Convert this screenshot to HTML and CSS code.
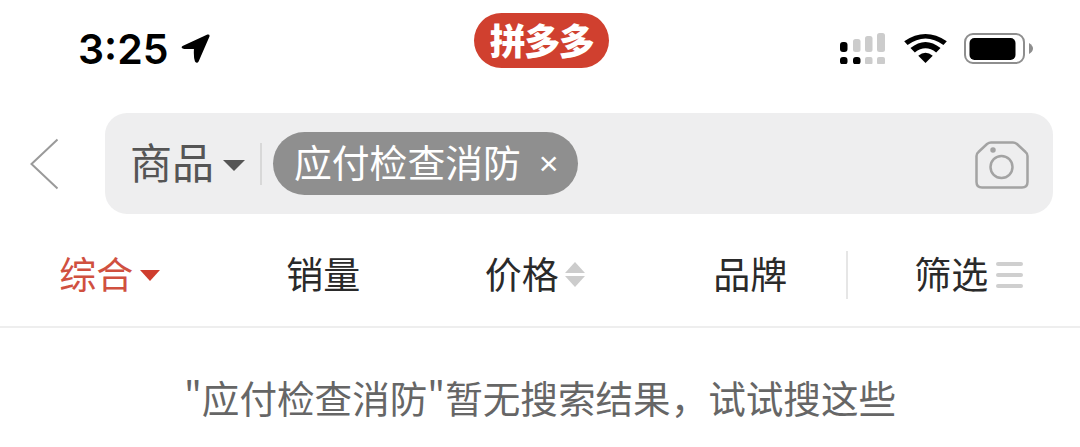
FILE: index.html
```html
<!DOCTYPE html>
<html lang="zh-CN">
<head>
<meta charset="utf-8">
<title>搜索结果</title>
<link rel="stylesheet" href="styles.css">
</head>
<body>
<div class="page">
  <header class="status">
    <div class="status-left">
      <span class="time">3:25</span>
      <svg class="loc" viewBox="0 0 28 28"><path d="M1.500 11.500 L25.500 0.500 Q28 0 27.500 2.500 L17 26.500 Q15.500 29 13.500 26.500 Q12 23 12.500 14.500 L3 14.500 Q-1 13.500 1.500 11.500Z"/></svg>
    </div>
    <div class="status-mid"><span class="logo">拼多多</span></div>
    <div class="status-right">
      <svg class="signal" viewBox="0 0 45 31">
        <rect x="0" y="9" width="7.500" height="10" rx="3" fill="#000"/>
        <rect x="13" y="6" width="7.500" height="13" rx="2.500" fill="#ccc"/>
        <rect x="25" y="3" width="7.500" height="16" rx="2.500" fill="#ccc"/>
        <rect x="37" y="0" width="8" height="19" rx="2.500" fill="#ccc"/>
        <rect x="0" y="24" width="7.500" height="7.500" rx="3" fill="#000"/>
        <rect x="13" y="24" width="7.500" height="7.500" rx="3" fill="#000"/>
        <rect x="25" y="24" width="7.500" height="7.500" rx="2" fill="#ccc"/>
        <rect x="37" y="24" width="8" height="7.500" rx="2" fill="#ccc"/>
      </svg>
      <svg class="wifi" viewBox="0 0 44 32">
        <path d="M22 31 L14.500 23.500 Q22 17.500 29.500 23.500Z"/>
        <path d="M11 20 L6.500 15.500 Q22 3 37.500 15.500 L33 20 Q22 11.500 11 20Z"/>
        <path d="M3.500 12.500 L0 8.500 Q22 -6.500 44 8.500 L40.500 12.500 Q22 -1 3.500 12.500Z"/>
      </svg>
      <svg class="battery" viewBox="0 0 69 31">
        <rect x="1" y="1" width="59" height="29" rx="8" fill="none" stroke="#8e8e8e" stroke-width="2"/>
        <rect x="5.500" y="5" width="46" height="22" rx="5" fill="#000"/>
        <path d="M65 10 Q69 12.500 69 15.500 Q69 18.500 65 21Z" fill="#8e8e8e"/>
      </svg>
    </div>
  </header>

  <div class="search-row">
    <svg class="back" viewBox="0 0 30 52"><path d="M28 1.500 L2 26 L28 50.500"/></svg>
    <div class="search">
      <span class="scope">商品</span>
      <span class="caret caret-dark"></span>
      <span class="vline"></span>
      <span class="chip"><span class="chip-text">应付检查消防</span><span class="chip-x">×</span></span>
      <svg class="camera" viewBox="0 0 54 48">
        <path d="M1.500 15 Q1.500 12.500 3.500 11 L12 3 Q14 1.500 16 1.500 L38 1.500 Q40 1.500 42 3 L50.500 11 Q52.500 12.500 52.500 15 L52.500 41 Q52.500 46.500 47 46.500 L7 46.500 Q1.500 46.500 1.500 41Z"/>
        <circle cx="26.500" cy="26" r="11"/>
        <circle class="dot" cx="18" cy="9" r="1.500"/>
      </svg>
    </div>
  </div>

  <nav class="tabs">
    <div class="tab active"><span>综合</span><span class="caret caret-red"></span></div>
    <div class="tab"><span>销量</span></div>
    <div class="tab tab-price"><span>价格</span>
      <span class="sort"><span class="sort-up"></span><span class="sort-down"></span></span>
    </div>
    <div class="tab"><span>品牌</span></div>
    <div class="tab tab-filter"><span>筛选</span>
      <span class="bars"><i></i><i></i><i></i></span>
    </div>
  </nav>

  <p class="empty">"应付检查消防"暂无搜索结果，试试搜这些</p>
</div>
</body>
</html>
```
FILE: styles.css
```css
* { box-sizing: border-box; }
html, body { margin: 0; padding: 0; background: #fff; }
body { font-family: "Noto Sans CJK SC", "Liberation Sans", sans-serif; }
.page { width: 1080px; height: 447px; overflow: hidden; }

.status {
  height: 97px;
  padding: 13px 47px 0 78px;
  display: grid;
  grid-template-columns: 396px 135px 1fr;
  align-items: start;
}
.status-left { display: flex; align-items: center; gap: 12px; height: 70px; }
.time { font-family: "Inter", "Liberation Sans", sans-serif; font-size: 41px; font-weight: 600; color: #000; line-height: 70px; padding-top: 2px; }
.loc { width: 29px; height: 29px; fill: #000; }
.status-mid { display: flex; }
.logo {
  width: 135px; height: 55px;
  border-radius: 28px;
  background: #d0402f;
  color: #fff;
  font-size: 36px; font-weight: 900;
  line-height: 53px;
  text-align: center;
  letter-spacing: -1.500px;
}
.status-right { display: flex; align-items: center; justify-content: flex-end; height: 70px; gap: 17px; }
.signal { width: 45px; height: 31px; margin-right: 2px; }
.wifi { width: 43px; height: 31px; fill: #000; }
.battery { width: 69px; height: 31px; }

.search-row { display: flex; align-items: center; height: 117px; padding-left: 29px; padding-top: 16px; }
.back { width: 31px; height: 52px; fill: none; stroke: #9a9a9a; stroke-width: 2; margin-right: 45px; }
.search {
  width: 948px; height: 101px;
  background: #eeeeef;
  border-radius: 22px;
  display: flex; align-items: center;
  padding: 0 24px 0 25px;
}
.scope { font-size: 42px; color: #555; line-height: 1; padding-bottom: 5px; }
.caret { display: inline-block; width: 0; height: 0; border-left: 11px solid transparent; border-right: 11px solid transparent; }
.caret-dark { border-top: 11px solid #555; margin-left: 9px; margin-top: 3px; }
.vline { width: 2px; height: 42px; background: #d8d8d8; margin: 0 11px 0 15px; }
.chip {
  width: 305px; height: 63px;
  border-radius: 32px;
  background: #8f8f8f;
  color: #fff;
  display: flex; align-items: center;
  padding: 0 0 0 21px;
}
.chip-text { font-size: 37.800px; line-height: 1; padding-bottom: 5px; }
.chip-x { font-family: "Liberation Sans", sans-serif; font-size: 34px; line-height: 1; margin-left: 18px; padding-bottom: 2px; }
.camera { width: 54px; height: 48px; margin-left: auto; margin-top: 2px; fill: none; stroke: #a3a3a3; stroke-width: 2.500; }
.camera .dot { fill: #a3a3a3; }

.tabs {
  height: 114px;
  padding: 6px 0 0 3px;
  display: grid;
  grid-template-columns: repeat(5, 213.500px);
  align-items: center;
  border-bottom: 2px solid #eeeeee;
}
.tab { position: relative; display: flex; align-items: center; justify-content: center; font-size: 37px; color: #2a2a2a; height: 48px; line-height: 48px; }
.tab.active { color: #d0503f; }
.caret-red { border-top: 11px solid #cf3d2e; margin-left: 7px; margin-top: 4px; border-left-width: 10px; border-right-width: 10px; }
.tab-price { padding-right: 4px; }
.sort { display: flex; flex-direction: column; gap: 3px; margin-left: 6px; margin-top: 2px; }
.sort-up, .sort-down { display: block; width: 0; height: 0; border-left: 10px solid transparent; border-right: 10px solid transparent; }
.sort-up { border-bottom: 11px solid #cccccc; }
.sort-down { border-top: 11px solid #cccccc; }
.tab-filter { padding-left: 10px; }
.tab-filter::before { content: ""; position: absolute; left: -11px; top: 2px; width: 2px; height: 48px; background: #e6e6e6; }
.bars { display: flex; flex-direction: column; gap: 7px; margin-left: 8px; margin-top: 3px; }
.bars i { display: block; width: 27px; height: 4px; border-radius: 2px; background: #cfcfcf; }

.empty { margin: 41px 0 0; padding-left: 184px; font-size: 37.600px; line-height: 56px; color: #666; white-space: nowrap; }
```
